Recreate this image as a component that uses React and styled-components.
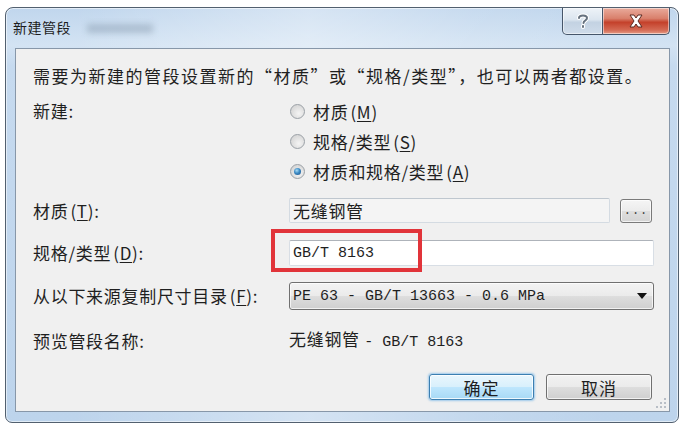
import styled, { createGlobalStyle } from "styled-components";

const GlobalStyle = createGlobalStyle`
  html, body {
    margin: 0;
    padding: 0;
    background: #ffffff;
  }
  body {
    font-family: "Noto Sans CJK SC", "Noto Sans", sans-serif;
    color: #1f1f1f;
  }
`;

const Page = styled.div`
  width: 684px;
  height: 429px;
  box-sizing: border-box;
  padding: 7px 0 0 5px;
`;

// window frame with aero-like glass
const Window = styled.div`
  width: 674px;
  height: 416px;
  box-sizing: border-box;
  border: 1px solid #52606f;
  border-radius: 8px 8px 7px 7px;
  background: linear-gradient(
      90deg,
      rgba(255, 255, 255, 0) 10%,
      rgba(255, 255, 255, 0.35) 45%,
      rgba(255, 255, 255, 0.1) 70%,
      rgba(255, 255, 255, 0) 90%
    ),
    linear-gradient(180deg, #c0d6ed 0%, #d3e3f3 9%, #c6daef 14%, #bdd4ec 100%);
  box-shadow: inset 0 0 0 1px rgba(255, 255, 255, 0.55);
  display: flex;
  flex-direction: column;
  overflow: hidden;
`;

const TitleBar = styled.div`
  height: 40px;
  flex: none;
  display: flex;
  align-items: flex-start;
  padding: 0 8px 0 7px;
`;

const Title = styled.div`
  font-size: 14px;
  line-height: 16px;
  padding-top: 11px;
  color: #1c1c1c;
  letter-spacing: 0.5px;
`;

const Smudge = styled.div`
  width: 66px;
  height: 9px;
  margin: 16px 0 0 16px;
  background: rgba(110, 130, 150, 0.35);
  filter: blur(3px);
`;

const CaptionGroup = styled.div`
  margin-left: auto;
  display: flex;
`;

const CaptionButton = styled.div`
  height: 27px;
  width: ${(p) => (p.wide ? "67px" : "41px")};
  box-sizing: border-box;
  border: 1px solid #46566a;
  border-top: none;
  border-left: ${(p) => (p.wide ? "none" : "1px solid #46566a")};
  border-radius: ${(p) => (p.wide ? "0 0 5px 0" : "0 0 0 5px")};
  background: ${(p) =>
    p.wide
      ? "linear-gradient(180deg, #e9ab9c 0%, #d9806c 40%, #c4412b 55%, #d46a54 85%, #e69c86 100%)"
      : "linear-gradient(180deg, #eef3f8 0%, #dbe5ef 45%, #c3d2e2 55%, #cfdcea 100%)"};
  box-shadow: inset 0 0 0 1px rgba(255, 255, 255, 0.5);
  display: flex;
  align-items: center;
  justify-content: center;
`;

const Client = styled.div`
  flex: 1;
  margin: 0 8px 10px 9px;
  border: 1px solid #8797a9;
  background: #f0f0f0;
  position: relative;
  padding: 15px 15px 0 17px;
  display: flex;
  flex-direction: column;
  font-size: 17px;
  letter-spacing: 0.7px;
`;

const Intro = styled.div`
  line-height: 24px;
  letter-spacing: 1.5px;
  white-space: nowrap;
`;

const Row = styled.div`
  display: grid;
  grid-template-columns: 256px 1fr;
  align-items: ${(p) => (p.top ? "start" : "center")};
  margin-top: ${(p) => p.gap}px;
  position: relative;
`;

const Label = styled.div`
  line-height: ${(p) => p.lh || 24}px;
  white-space: nowrap;
`;

const Key = styled.span`
  text-decoration: underline;
  text-underline-offset: 2px;
`;

const Paren = styled.span`
  margin-left: 2px;
`;

const RadioList = styled.div`
  display: flex;
  flex-direction: column;
`;

const RadioItem = styled.div`
  height: 30px;
  display: flex;
  align-items: center;
  gap: 8px;
  padding-left: 1px;
`;

const RadioDot = styled.span`
  width: 15px;
  height: 15px;
  box-sizing: border-box;
  border-radius: 50%;
  border: 1px solid #9aa0a6;
  background: radial-gradient(circle at 60% 65%, #f4f4f4 0%, #dcdcdc 60%, #cfcfcf 100%);
  display: flex;
  align-items: center;
  justify-content: center;
  flex: none;
  &::after {
    content: "";
    display: ${(p) => (p.checked ? "block" : "none")};
    width: 7px;
    height: 7px;
    border-radius: 50%;
    background: radial-gradient(circle at 40% 35%, #a9dcf6 0%, #3b8ac4 45%, #1d4f86 100%);
  }
`;

const Field = styled.div`
  display: flex;
  align-items: center;
  gap: 10px;
  padding-right: ${(p) => p.pr || 0}px;
`;

const TextBox = styled.div`
  flex: 1;
  height: ${(p) => p.h}px;
  box-sizing: border-box;
  border: 1px solid ${(p) => (p.disabled ? "#d4dbe2" : "#d8dee5")};
  border-top-color: ${(p) => (p.disabled ? "#bfc7cf" : "#aeb3ba")};
  border-radius: 2px;
  background: ${(p) => (p.disabled ? "#f4f4f4" : "#ffffff")};
  padding-left: 3px;
  display: flex;
  align-items: center;
  font-family: ${(p) => (p.mono ? '"Liberation Mono", "Noto Sans CJK SC", monospace' : "inherit")};
  font-size: ${(p) => (p.mono ? "15px" : "17px")};
  letter-spacing: ${(p) => (p.mono ? "0" : "0.7px")};
  white-space: nowrap;
`;

// red annotation box drawn over the spec field
const Highlight = styled.div`
  position: absolute;
  left: 238px;
  top: -11px;
  width: 151px;
  height: 43px;
  box-sizing: border-box;
  border: 4px solid #e1343a;
  pointer-events: none;
`;

const SmallButton = styled.div`
  width: 32px;
  height: 24px;
  box-sizing: border-box;
  border: 1px solid #7a7a7a;
  border-radius: 3px;
  background: linear-gradient(180deg, #f5f5f5 0%, #ececec 48%, #dedede 52%, #d4d4d4 100%);
  box-shadow: inset 0 0 0 1px rgba(255, 255, 255, 0.7);
  font-family: "Liberation Mono", monospace;
  font-size: 12px;
  line-height: 1;
  display: flex;
  align-items: flex-end;
  justify-content: center;
  padding-bottom: 5px;
  color: #444;
  letter-spacing: 1px;
`;

const Select = styled.div`
  flex: 1;
  height: 28px;
  box-sizing: border-box;
  border: 1px solid #707070;
  border-radius: 3px;
  background: linear-gradient(180deg, #f3f3f3 0%, #ebebeb 48%, #dddddd 52%, #cfcfcf 100%);
  box-shadow: inset 0 0 0 1px rgba(255, 255, 255, 0.7);
  display: flex;
  align-items: center;
  padding: 0 6px 0 3px;
  font-family: "Liberation Mono", "Noto Sans CJK SC", monospace;
  font-size: 15px;
  letter-spacing: 0;
  white-space: nowrap;
`;

const Arrow = styled.span`
  margin-left: auto;
  width: 0;
  height: 0;
  border-left: 5px solid transparent;
  border-right: 5px solid transparent;
  border-top: 6px solid #111;
`;

const Mono = styled.span`
  font-family: "Liberation Mono", monospace;
  font-size: 15px;
  letter-spacing: 0;
`;

const Footer = styled.div`
  display: flex;
  justify-content: flex-end;
  gap: 12px;
  margin-top: 19px;
  padding-right: 2px;
`;

const DialogButton = styled.div`
  width: ${(p) => p.w}px;
  height: 26px;
  box-sizing: border-box;
  border: 1px solid ${(p) => (p.primary ? "#3c7fb1" : "#707070")};
  border-radius: 3px;
  background: ${(p) =>
    p.primary
      ? "linear-gradient(180deg, #eaf6fd 0%, #d9f0fc 48%, #bee6fd 52%, #a7d9f5 100%)"
      : "linear-gradient(180deg, #f2f2f2 0%, #ebebeb 48%, #dddddd 52%, #cfcfcf 100%)"};
  box-shadow: ${(p) =>
    p.primary
      ? "inset 0 0 0 1px rgba(255,255,255,0.8), 0 0 2px 1px rgba(90,170,230,0.55)"
      : "inset 0 0 0 1px rgba(255,255,255,0.7)"};
  display: flex;
  align-items: center;
  justify-content: center;
  font-size: 17px;
  letter-spacing: 1px;
`;

const Grip = styled.svg`
  position: absolute;
  right: 3px;
  bottom: 3px;
`;

const radios = [
  { text: "材质", key: "M" },
  { text: "规格/类型", key: "S" },
  { text: "材质和规格/类型", key: "A", checked: true },
];

export default function App() {
  return (
    <>
      <GlobalStyle />
      <Page>
        <Window>
          <TitleBar>
            <Title>新建管段</Title>
            <Smudge />
            <CaptionGroup>
              <CaptionButton>
                <svg width="14" height="16" viewBox="0 0 14 16">
                  <path
                    d="M3 5 C3 1.5 11 1.5 11 5 C11 7.5 7.5 7.5 7.5 10 M7 13 L7 14"
                    fill="none"
                    stroke="#ffffff"
                    strokeWidth="4"
                    strokeLinecap="round"
                  />
                  <path
                    d="M3 5 C3 1.5 11 1.5 11 5 C11 7.5 7.5 7.5 7.5 10 M7 13 L7 14"
                    fill="none"
                    stroke="#66727f"
                    strokeWidth="2"
                    strokeLinecap="round"
                  />
                </svg>
              </CaptionButton>
              <CaptionButton wide>
                <svg width="16" height="14" viewBox="0 0 16 14">
                  <path
                    d="M2 1 L6 1 L8 4 L10 1 L14 1 L10 7 L14 13 L10 13 L8 10 L6 13 L2 13 L6 7 Z"
                    fill="#ffffff"
                    stroke="#5b2a22"
                    strokeWidth="1"
                    strokeLinejoin="round"
                  />
                </svg>
              </CaptionButton>
            </CaptionGroup>
          </TitleBar>
          <Client>
            <Intro>需要为新建的管段设置新的“材质”或“规格/类型”，也可以两者都设置。</Intro>
            <Row gap={8} top>
              <Label lh={30}>新建:</Label>
              <RadioList>
                {radios.map((r) => (
                  <RadioItem key={r.key}>
                    <RadioDot checked={r.checked} />
                    <span>
                      {r.text}
                      <Paren>
                        (<Key>{r.key}</Key>)
                      </Paren>
                    </span>
                  </RadioItem>
                ))}
              </RadioList>
            </Row>
            <Row gap={12}>
              <Label>
                材质<Paren>(<Key>T</Key>):</Paren>
              </Label>
              <Field pr={2}>
                <TextBox h={25} disabled>
                  无缝钢管
                </TextBox>
                <SmallButton>...</SmallButton>
              </Field>
            </Row>
            <Row gap={17}>
              <Label>
                规格/类型<Paren>(<Key>D</Key>):</Paren>
              </Label>
              <Field>
                <TextBox h={26} mono>
                  GB/T 8163
                </TextBox>
              </Field>
              <Highlight />
            </Row>
            <Row gap={16}>
              <Label>
                从以下来源复制尺寸目录<Paren>(<Key>F</Key>):</Paren>
              </Label>
              <Field>
                <Select>
                  PE 63 - GB/T 13663 - 0.6 MPa
                  <Arrow />
                </Select>
              </Field>
            </Row>
            <Row gap={17}>
              <Label>预览管段名称:</Label>
              <Label>
                无缝钢管 <Mono>- GB/T 8163</Mono>
              </Label>
            </Row>
            <Footer>
              <DialogButton primary w={105}>
                确定
              </DialogButton>
              <DialogButton w={106}>取消</DialogButton>
            </Footer>
            <Grip width="11" height="11" viewBox="0 0 11 11">
              {[
                [9, 1],
                [9, 5],
                [5, 5],
                [9, 9],
                [5, 9],
                [1, 9],
              ].map(([x, y]) => (
                <rect key={`${x}-${y}`} x={x} y={y} width="2" height="2" fill="#b8bec6" />
              ))}
            </Grip>
          </Client>
        </Window>
      </Page>
    </>
  );
}
